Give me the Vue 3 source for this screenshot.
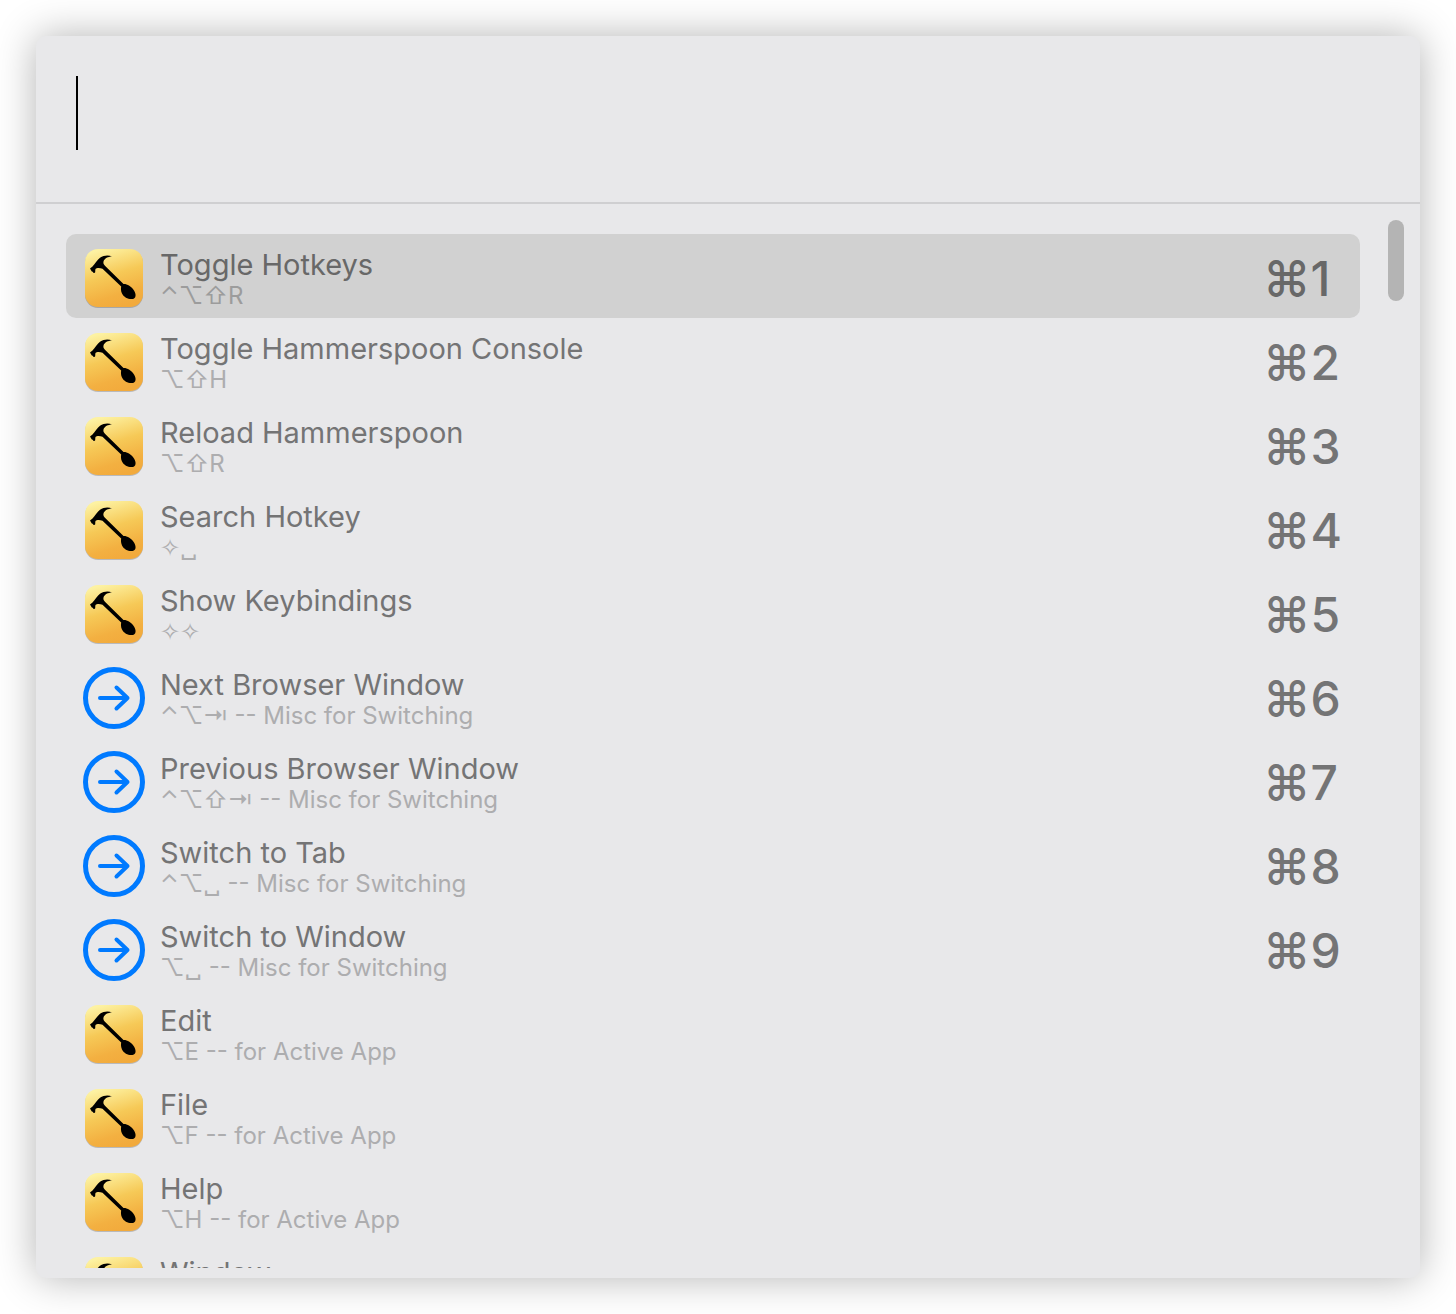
<script setup>
import { ref } from 'vue'

const query = ref('')
const selected = ref(0)

const items = [
  { title: 'Toggle Hotkeys', keys: '⌃⌥⇧R', icon: 'hammer' },
  { title: 'Toggle Hammerspoon Console', keys: '⌥⇧H', icon: 'hammer' },
  { title: 'Reload Hammerspoon', keys: '⌥⇧R', icon: 'hammer' },
  { title: 'Search Hotkey', keys: '✧␣', icon: 'hammer' },
  { title: 'Show Keybindings', keys: '✧✧', icon: 'hammer' },
  { title: 'Next Browser Window', keys: '⌃⌥⇥', note: 'Misc for Switching', icon: 'arrow' },
  { title: 'Previous Browser Window', keys: '⌃⌥⇧⇥', note: 'Misc for Switching', icon: 'arrow' },
  { title: 'Switch to Tab', keys: '⌃⌥␣', note: 'Misc for Switching', icon: 'arrow' },
  { title: 'Switch to Window', keys: '⌥␣', note: 'Misc for Switching', icon: 'arrow' },
  { title: 'Edit', keys: '⌥E', note: 'for Active App', icon: 'hammer' },
  { title: 'File', keys: '⌥F', note: 'for Active App', icon: 'hammer' },
  { title: 'Help', keys: '⌥H', note: 'for Active App', icon: 'hammer' },
  { title: 'Window', icon: 'hammer' },
]
</script>

<template>
  <main class="stage">
    <section class="chooser">
      <header class="search">
        <span class="caret" aria-hidden="true"></span>
        <input v-model="query" class="field" type="text" aria-label="Search" autocomplete="off" />
      </header>
      <div class="body">
        <ul class="list">
          <li v-for="(item, i) in items" :key="item.title">
            <button type="button" class="row" :class="{ active: i === selected }" @click="selected = i">
              <svg v-if="item.icon === 'hammer'" class="icon" viewBox="0 0 62 62" aria-hidden="true">
                <defs>
                  <linearGradient :id="'gold' + i" x1="0.3" y1="0" x2="0.6" y2="1">
                    <stop offset="0" stop-color="#fdf2a2" />
                    <stop offset="0.45" stop-color="#f6c957" />
                    <stop offset="0.8" stop-color="#f3b041" />
                    <stop offset="1" stop-color="#f2aa3c" />
                  </linearGradient>
                </defs>
                <rect x="2" y="3" width="58" height="58" rx="13" fill="#000" opacity="0.2" />
                <rect x="2" y="2" width="58" height="58" rx="13" :fill="'url(#gold' + i + ')'" />
                <path d="M7 21.500 L9.500 19.500 C12 16.500 14.500 13 17 10.800 C21 8 26 8 29 9.600 C25 9.700 21.500 11.500 20.500 14.500 C20 16.500 21 17.800 22.200 19 L40.500 37 C44 36.800 48.500 39.500 51 43.500 C53.500 47.500 53 51.500 49.500 52 C45.500 52.500 41 50.500 39 46.500 C37.800 44 37.800 41.500 38.200 39.500 L19.500 21.800 C17 20.800 14 20.500 12.500 22 C12 23.500 12.500 24.500 12 25.800 L10.500 26 C10 24.800 9.500 24.500 8.800 24.400 Z" />
              </svg>
              <svg v-else class="icon" viewBox="0 0 62 62" fill="none" stroke="#007aff" stroke-linecap="round" stroke-linejoin="round" aria-hidden="true">
                <circle cx="31" cy="31" r="28.500" stroke-width="5" />
                <path d="M17 31 H44.500 M33.500 20.500 L44.500 31 L33.500 41.500" stroke-width="4" />
              </svg>
              <span class="text">
                <span class="title">{{ item.title }}</span>
                <span class="sub">{{ item.keys }}<template v-if="item.note"> -- {{ item.note }}</template></span>
              </span>
              <kbd v-if="i < 9" class="shortcut">⌘{{ i + 1 }}</kbd>
            </button>
          </li>
        </ul>
        <div class="track" aria-hidden="true"><div class="thumb"></div></div>
      </div>
    </section>
  </main>
</template>

<style>
body {
  margin: 0;
  background: #fff;
}
</style>

<style scoped>
.stage {
  box-sizing: border-box;
  height: 100vh;
  padding: 36px;
  font-family: Inter, "Liberation Sans", "DejaVu Sans", sans-serif;
}
.chooser {
  display: flex;
  flex-direction: column;
  height: 100%;
  border-radius: 10px;
  background: #e8e8ea;
  box-shadow: 0 0 40px rgba(0, 0, 0, 0.3);
}
.search {
  display: flex;
  padding: 40px 40px 52px;
  border-bottom: 2px solid #cfcfd1;
}
.caret {
  width: 2px;
  height: 74px;
  background: #000;
}
.field {
  flex: 1;
  min-width: 0;
  padding: 0;
  border: 0;
  outline: 0;
  background: transparent;
  caret-color: transparent;
  color: #222;
  font: inherit;
  font-size: 60px;
}
.body {
  display: flex;
  flex: 1;
  min-height: 0;
  margin-bottom: 10px;
}
.list {
  flex: 1;
  min-width: 0;
  margin: 0;
  padding: 30px 28px 0 30px;
  list-style: none;
  overflow: hidden;
}
.row {
  display: flex;
  align-items: center;
  box-sizing: border-box;
  width: 100%;
  height: 84px;
  padding: 4px 0 0 17px;
  border: 0;
  border-radius: 10px;
  background: transparent;
  color: #747475;
  font: inherit;
  text-align: left;
}
.row.active {
  background: #d1d1d1;
  color: #686868;
}
.icon {
  flex: none;
  width: 62px;
  height: 62px;
  margin-right: 15px;
}
.text {
  display: flex;
  flex: 1;
  flex-direction: column;
  min-width: 0;
  padding-top: 4px;
  white-space: nowrap;
}
.title {
  font-size: 29px;
  line-height: 32px;
}
.sub {
  min-height: 30px;
  color: #adadaf;
  font-size: 24px;
  line-height: 30px;
}
.active .sub {
  color: #9c9c9c;
}
.shortcut {
  width: 97px;
  padding-top: 2px;
  font-family: inherit;
  font-size: 48px;
  font-weight: 500;
  line-height: 60px;
}
.track {
  width: 16px;
  padding: 16px 16px 0 0;
}
.thumb {
  height: 81px;
  border-radius: 8px;
  background: #b4b4b4;
}
</style>
